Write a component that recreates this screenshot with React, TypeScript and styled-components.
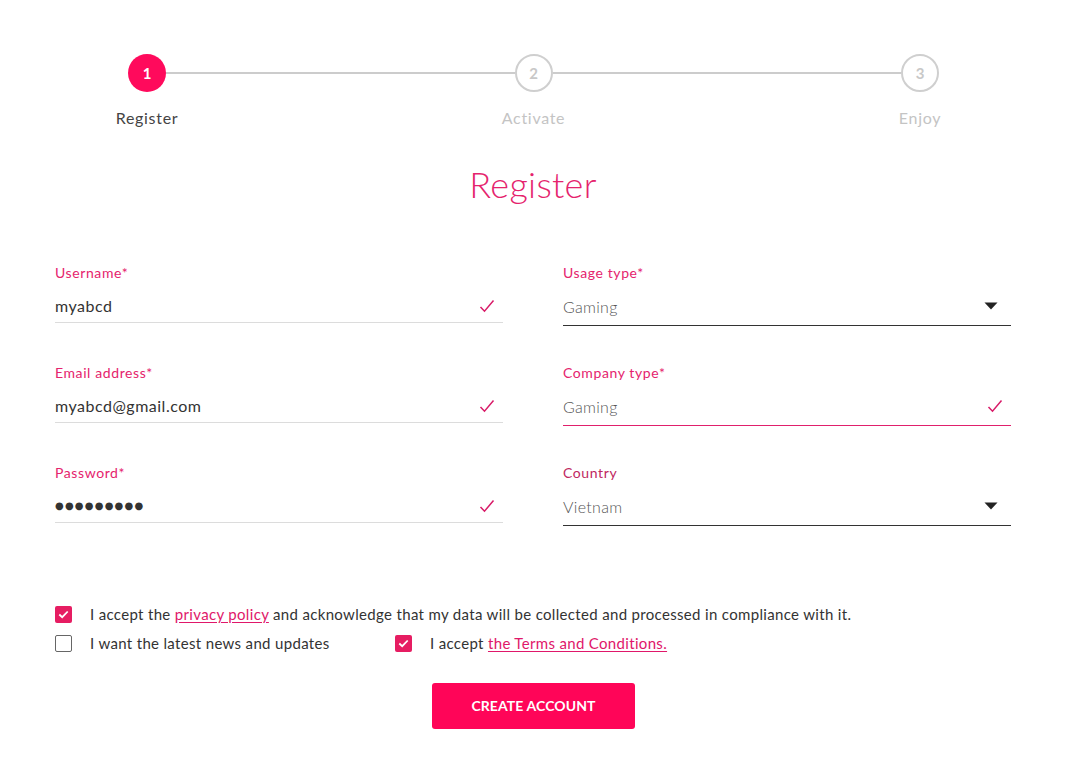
import { FC } from "react";
import styled, { createGlobalStyle } from "styled-components";

const PINK = "#ff0a5c";
const LABEL_PINK = "#e5236d";

const GlobalStyle = createGlobalStyle`
  body {
    margin: 0;
    background: #fff;
    font-family: Lato, "Open Sans", Arial, sans-serif;
    color: #333;
  }
`;

const Page = styled.div`
  width: 1080px;
  height: 757px;
  box-sizing: border-box;
  padding: 54px 0 0 55px;
`;

const Stepper = styled.div`
  display: flex;
  align-items: flex-start;
  margin-left: 73px;
  width: 811px;
`;

const Step = styled.div`
  width: 38px;
  display: flex;
  flex-direction: column;
  align-items: center;
`;

const Circle = styled.div<{ active?: boolean }>`
  width: 38px;
  height: 38px;
  box-sizing: border-box;
  border-radius: 50%;
  display: flex;
  align-items: center;
  justify-content: center;
  font-size: 15px;
  font-weight: 700;
  background: ${(p) => (p.active ? PINK : "#fff")};
  color: ${(p) => (p.active ? "#fff" : "#c8c8c8")};
  border: ${(p) => (p.active ? "none" : "2px solid #cfcfcf")};
`;

const StepLabel = styled.div<{ active?: boolean }>`
  margin-top: 16px;
  white-space: nowrap;
  font-size: 16px;
  letter-spacing: 0.7px;
  color: ${(p) => (p.active ? "#444" : "#c4c4c4")};
`;

const Line = styled.div`
  flex: 1;
  height: 2px;
  background: #cccccc;
  margin-top: 18px;
`;

const Title = styled.h1`
  margin: 35px 0 0;
  width: 956px;
  text-align: center;
  font-size: 36px;
  font-weight: 300;
  color: ${LABEL_PINK};
  letter-spacing: 0.3px;
`;

const Grid = styled.div`
  margin-top: 57px;
  width: 956px;
  display: grid;
  grid-template-columns: 448px 448px;
  column-gap: 60px;
  grid-auto-rows: 100px;
`;

const Field = styled.div`
  display: flex;
  flex-direction: column;
`;

const Label = styled.div<{ muted?: boolean }>`
  font-size: 14px;
  letter-spacing: 0.6px;
  height: 20px;
  line-height: 20px;
  color: ${(p) => (p.muted ? "#c0285f" : LABEL_PINK)};
`;

const Control = styled.div<{ variant: "text" | "select" | "focus" }>`
  margin-top: 8px;
  height: ${(p) => (p.variant === "text" ? "32px" : "35px")};
  box-sizing: border-box;
  display: flex;
  align-items: center;
  justify-content: space-between;
  padding-bottom: ${(p) => (p.variant === "text" ? "2px" : "4px")};
  border-bottom: 1px solid
    ${(p) =>
      p.variant === "text" ? "#dcdcdc" : p.variant === "focus" ? "#e0206c" : "#333"};
`;

const Value = styled.span<{ light?: boolean }>`
  font-size: 16px;
  letter-spacing: ${(p) => (p.light ? "0.3px" : "0.5px")};
  font-weight: ${(p) => (p.light ? 300 : 400)};
  color: ${(p) => (p.light ? "#555" : "#333")};
`;

const Dots = styled.span`
  font-size: 10px;
  letter-spacing: 1.2px;
  color: #333;
  font-family: "DejaVu Sans", sans-serif;
`;

const IconSlot = styled.span<{ right?: number }>`
  display: flex;
  align-items: center;
  margin-right: ${(p) => p.right ?? 8}px;
`;

const Checks = styled.div`
  margin-top: 42px;
  display: flex;
  flex-direction: column;
  gap: 11px;
`;

const CheckRow = styled.div`
  display: flex;
  align-items: center;
`;

const CheckItem = styled.label<{ width?: number }>`
  display: flex;
  align-items: center;
  width: ${(p) => (p.width ? `${p.width}px` : "auto")};
  font-size: 15px;
  letter-spacing: 0.33px;
  color: #333;
`;

const Box = styled.span<{ checked?: boolean }>`
  width: 17px;
  height: 17px;
  box-sizing: border-box;
  border-radius: 2px;
  margin-right: 18px;
  display: flex;
  align-items: center;
  justify-content: center;
  background: ${(p) => (p.checked ? "#e61d62" : "#fff")};
  border: ${(p) => (p.checked ? "none" : "1.5px solid #666")};
`;

const Link = styled.a`
  color: #e0176a;
  text-decoration: underline;
  text-underline-offset: 2px;
`;

const ButtonRow = styled.div`
  width: 956px;
  display: flex;
  justify-content: center;
  margin-top: 31px;
`;

const Button = styled.button`
  width: 203px;
  height: 46px;
  border: none;
  border-radius: 3px;
  background: #ff0558;
  color: #fff;
  font-family: Lato, sans-serif;
  font-weight: 700;
  font-size: 14px;
  letter-spacing: 0.1px;
  margin-left: 1px;
  padding-bottom: 3px;
`;

const Tick: FC = () => (
  <svg width="16" height="14" viewBox="0 0 16 14">
    <path d="M1.5 8 L5.5 12.2 L14.5 1.5" fill="none" stroke="#d81b68" strokeWidth="1.5" />
  </svg>
);

const Caret: FC = () => (
  <svg width="14" height="8" viewBox="0 0 14 8">
    <path d="M0.5 0.5 L13.5 0.5 L7 7.5 Z" fill="#222" />
  </svg>
);

const BoxTick: FC = () => (
  <svg width="11" height="9" viewBox="0 0 11 9">
    <path d="M1.3 4.5 L4.2 7.2 L9.7 1.5" fill="none" stroke="#fff" strokeWidth="1.8" />
  </svg>
);

export default function App() {
  return (
    <Page>
      <GlobalStyle />
      <Stepper>
        <Step>
          <Circle active>1</Circle>
          <StepLabel active>Register</StepLabel>
        </Step>
        <Line />
        <Step>
          <Circle>2</Circle>
          <StepLabel>Activate</StepLabel>
        </Step>
        <Line />
        <Step>
          <Circle>3</Circle>
          <StepLabel>Enjoy</StepLabel>
        </Step>
      </Stepper>

      <Title>Register</Title>

      <Grid>
        <Field>
          <Label>Username*</Label>
          <Control variant="text">
            <Value>myabcd</Value>
            <IconSlot><Tick /></IconSlot>
          </Control>
        </Field>
        <Field>
          <Label>Usage type*</Label>
          <Control variant="select">
            <Value light>Gaming</Value>
            <IconSlot right={13}><Caret /></IconSlot>
          </Control>
        </Field>
        <Field>
          <Label>Email address*</Label>
          <Control variant="text">
            <Value>myabcd@gmail.com</Value>
            <IconSlot><Tick /></IconSlot>
          </Control>
        </Field>
        <Field>
          <Label>Company type*</Label>
          <Control variant="focus">
            <Value light>Gaming</Value>
            <IconSlot><Tick /></IconSlot>
          </Control>
        </Field>
        <Field>
          <Label>Password*</Label>
          <Control variant="text">
            <Dots>●●●●●●●●●</Dots>
            <IconSlot><Tick /></IconSlot>
          </Control>
        </Field>
        <Field>
          <Label muted>Country</Label>
          <Control variant="select">
            <Value light>Vietnam</Value>
            <IconSlot right={13}><Caret /></IconSlot>
          </Control>
        </Field>
      </Grid>

      <Checks>
        <CheckRow>
          <CheckItem>
            <Box checked><BoxTick /></Box>
            <span>
              I accept the <Link>privacy policy</Link> and acknowledge that my data will be
              collected and processed in compliance with it.
            </span>
          </CheckItem>
        </CheckRow>
        <CheckRow>
          <CheckItem width={340}>
            <Box />
            <span>I want the latest news and updates</span>
          </CheckItem>
          <CheckItem>
            <Box checked><BoxTick /></Box>
            <span>
              I accept <Link>the Terms and Conditions.</Link>
            </span>
          </CheckItem>
        </CheckRow>
      </Checks>

      <ButtonRow>
        <Button>CREATE ACCOUNT</Button>
      </ButtonRow>
    </Page>
  );
}
